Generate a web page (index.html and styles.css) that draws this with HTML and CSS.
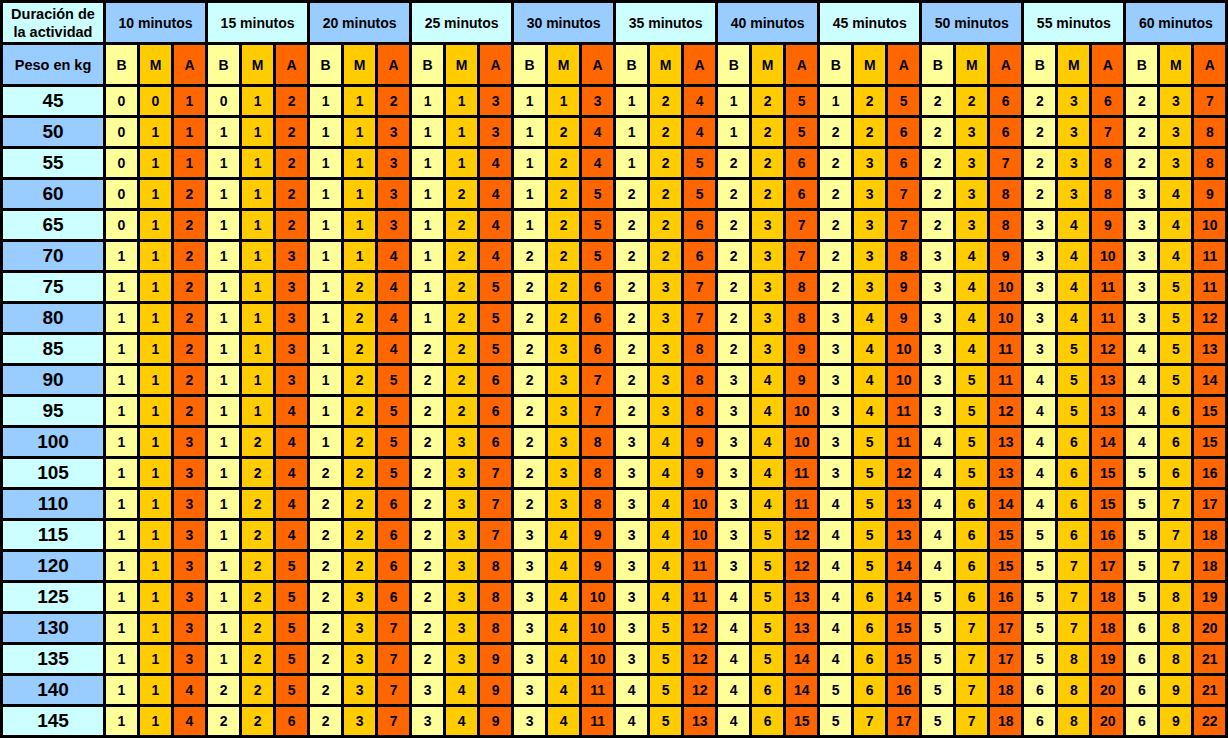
FILE: index.html
```html
<!DOCTYPE html>
<html lang="es">
<head>
<meta charset="utf-8">
<title>Calorías por actividad</title>
<link rel="stylesheet" href="styles.css">
</head>
<body>
<table class="grid">
<colgroup><col class="c-label"><col span="33" class="c-val"></colgroup>
<thead>
<tr class="h1">
<th class="corner">Duración de<br>la actividad</th>
<th colspan="3" class="blue">10 minutos</th><th colspan="3" class="cyan">15 minutos</th><th colspan="3" class="blue">20 minutos</th><th colspan="3" class="cyan">25 minutos</th><th colspan="3" class="blue">30 minutos</th><th colspan="3" class="cyan">35 minutos</th><th colspan="3" class="blue">40 minutos</th><th colspan="3" class="cyan">45 minutos</th><th colspan="3" class="blue">50 minutos</th><th colspan="3" class="cyan">55 minutos</th><th colspan="3" class="blue">60 minutos</th>
</tr>
<tr class="h2">
<th class="peso">Peso en kg</th>
<td>B</td><td>M</td><td>A</td><td>B</td><td>M</td><td>A</td><td>B</td><td>M</td><td>A</td><td>B</td><td>M</td><td>A</td><td>B</td><td>M</td><td>A</td><td>B</td><td>M</td><td>A</td><td>B</td><td>M</td><td>A</td><td>B</td><td>M</td><td>A</td><td>B</td><td>M</td><td>A</td><td>B</td><td>M</td><td>A</td><td>B</td><td>M</td><td>A</td>
</tr>
</thead>
<tbody>
<tr><th>45</th><td>0</td><td>0</td><td>1</td><td>0</td><td>1</td><td>2</td><td>1</td><td>1</td><td>2</td><td>1</td><td>1</td><td>3</td><td>1</td><td>1</td><td>3</td><td>1</td><td>2</td><td>4</td><td>1</td><td>2</td><td>5</td><td>1</td><td>2</td><td>5</td><td>2</td><td>2</td><td>6</td><td>2</td><td>3</td><td>6</td><td>2</td><td>3</td><td>7</td></tr>
<tr><th>50</th><td>0</td><td>1</td><td>1</td><td>1</td><td>1</td><td>2</td><td>1</td><td>1</td><td>3</td><td>1</td><td>1</td><td>3</td><td>1</td><td>2</td><td>4</td><td>1</td><td>2</td><td>4</td><td>1</td><td>2</td><td>5</td><td>2</td><td>2</td><td>6</td><td>2</td><td>3</td><td>6</td><td>2</td><td>3</td><td>7</td><td>2</td><td>3</td><td>8</td></tr>
<tr><th>55</th><td>0</td><td>1</td><td>1</td><td>1</td><td>1</td><td>2</td><td>1</td><td>1</td><td>3</td><td>1</td><td>1</td><td>4</td><td>1</td><td>2</td><td>4</td><td>1</td><td>2</td><td>5</td><td>2</td><td>2</td><td>6</td><td>2</td><td>3</td><td>6</td><td>2</td><td>3</td><td>7</td><td>2</td><td>3</td><td>8</td><td>2</td><td>3</td><td>8</td></tr>
<tr><th>60</th><td>0</td><td>1</td><td>2</td><td>1</td><td>1</td><td>2</td><td>1</td><td>1</td><td>3</td><td>1</td><td>2</td><td>4</td><td>1</td><td>2</td><td>5</td><td>2</td><td>2</td><td>5</td><td>2</td><td>2</td><td>6</td><td>2</td><td>3</td><td>7</td><td>2</td><td>3</td><td>8</td><td>2</td><td>3</td><td>8</td><td>3</td><td>4</td><td>9</td></tr>
<tr><th>65</th><td>0</td><td>1</td><td>2</td><td>1</td><td>1</td><td>2</td><td>1</td><td>1</td><td>3</td><td>1</td><td>2</td><td>4</td><td>1</td><td>2</td><td>5</td><td>2</td><td>2</td><td>6</td><td>2</td><td>3</td><td>7</td><td>2</td><td>3</td><td>7</td><td>2</td><td>3</td><td>8</td><td>3</td><td>4</td><td>9</td><td>3</td><td>4</td><td>10</td></tr>
<tr><th>70</th><td>1</td><td>1</td><td>2</td><td>1</td><td>1</td><td>3</td><td>1</td><td>1</td><td>4</td><td>1</td><td>2</td><td>4</td><td>2</td><td>2</td><td>5</td><td>2</td><td>2</td><td>6</td><td>2</td><td>3</td><td>7</td><td>2</td><td>3</td><td>8</td><td>3</td><td>4</td><td>9</td><td>3</td><td>4</td><td>10</td><td>3</td><td>4</td><td>11</td></tr>
<tr><th>75</th><td>1</td><td>1</td><td>2</td><td>1</td><td>1</td><td>3</td><td>1</td><td>2</td><td>4</td><td>1</td><td>2</td><td>5</td><td>2</td><td>2</td><td>6</td><td>2</td><td>3</td><td>7</td><td>2</td><td>3</td><td>8</td><td>2</td><td>3</td><td>9</td><td>3</td><td>4</td><td>10</td><td>3</td><td>4</td><td>11</td><td>3</td><td>5</td><td>11</td></tr>
<tr><th>80</th><td>1</td><td>1</td><td>2</td><td>1</td><td>1</td><td>3</td><td>1</td><td>2</td><td>4</td><td>1</td><td>2</td><td>5</td><td>2</td><td>2</td><td>6</td><td>2</td><td>3</td><td>7</td><td>2</td><td>3</td><td>8</td><td>3</td><td>4</td><td>9</td><td>3</td><td>4</td><td>10</td><td>3</td><td>4</td><td>11</td><td>3</td><td>5</td><td>12</td></tr>
<tr><th>85</th><td>1</td><td>1</td><td>2</td><td>1</td><td>1</td><td>3</td><td>1</td><td>2</td><td>4</td><td>2</td><td>2</td><td>5</td><td>2</td><td>3</td><td>6</td><td>2</td><td>3</td><td>8</td><td>2</td><td>3</td><td>9</td><td>3</td><td>4</td><td>10</td><td>3</td><td>4</td><td>11</td><td>3</td><td>5</td><td>12</td><td>4</td><td>5</td><td>13</td></tr>
<tr><th>90</th><td>1</td><td>1</td><td>2</td><td>1</td><td>1</td><td>3</td><td>1</td><td>2</td><td>5</td><td>2</td><td>2</td><td>6</td><td>2</td><td>3</td><td>7</td><td>2</td><td>3</td><td>8</td><td>3</td><td>4</td><td>9</td><td>3</td><td>4</td><td>10</td><td>3</td><td>5</td><td>11</td><td>4</td><td>5</td><td>13</td><td>4</td><td>5</td><td>14</td></tr>
<tr><th>95</th><td>1</td><td>1</td><td>2</td><td>1</td><td>1</td><td>4</td><td>1</td><td>2</td><td>5</td><td>2</td><td>2</td><td>6</td><td>2</td><td>3</td><td>7</td><td>2</td><td>3</td><td>8</td><td>3</td><td>4</td><td>10</td><td>3</td><td>4</td><td>11</td><td>3</td><td>5</td><td>12</td><td>4</td><td>5</td><td>13</td><td>4</td><td>6</td><td>15</td></tr>
<tr><th>100</th><td>1</td><td>1</td><td>3</td><td>1</td><td>2</td><td>4</td><td>1</td><td>2</td><td>5</td><td>2</td><td>3</td><td>6</td><td>2</td><td>3</td><td>8</td><td>3</td><td>4</td><td>9</td><td>3</td><td>4</td><td>10</td><td>3</td><td>5</td><td>11</td><td>4</td><td>5</td><td>13</td><td>4</td><td>6</td><td>14</td><td>4</td><td>6</td><td>15</td></tr>
<tr><th>105</th><td>1</td><td>1</td><td>3</td><td>1</td><td>2</td><td>4</td><td>2</td><td>2</td><td>5</td><td>2</td><td>3</td><td>7</td><td>2</td><td>3</td><td>8</td><td>3</td><td>4</td><td>9</td><td>3</td><td>4</td><td>11</td><td>3</td><td>5</td><td>12</td><td>4</td><td>5</td><td>13</td><td>4</td><td>6</td><td>15</td><td>5</td><td>6</td><td>16</td></tr>
<tr><th>110</th><td>1</td><td>1</td><td>3</td><td>1</td><td>2</td><td>4</td><td>2</td><td>2</td><td>6</td><td>2</td><td>3</td><td>7</td><td>2</td><td>3</td><td>8</td><td>3</td><td>4</td><td>10</td><td>3</td><td>4</td><td>11</td><td>4</td><td>5</td><td>13</td><td>4</td><td>6</td><td>14</td><td>4</td><td>6</td><td>15</td><td>5</td><td>7</td><td>17</td></tr>
<tr><th>115</th><td>1</td><td>1</td><td>3</td><td>1</td><td>2</td><td>4</td><td>2</td><td>2</td><td>6</td><td>2</td><td>3</td><td>7</td><td>3</td><td>4</td><td>9</td><td>3</td><td>4</td><td>10</td><td>3</td><td>5</td><td>12</td><td>4</td><td>5</td><td>13</td><td>4</td><td>6</td><td>15</td><td>5</td><td>6</td><td>16</td><td>5</td><td>7</td><td>18</td></tr>
<tr><th>120</th><td>1</td><td>1</td><td>3</td><td>1</td><td>2</td><td>5</td><td>2</td><td>2</td><td>6</td><td>2</td><td>3</td><td>8</td><td>3</td><td>4</td><td>9</td><td>3</td><td>4</td><td>11</td><td>3</td><td>5</td><td>12</td><td>4</td><td>5</td><td>14</td><td>4</td><td>6</td><td>15</td><td>5</td><td>7</td><td>17</td><td>5</td><td>7</td><td>18</td></tr>
<tr><th>125</th><td>1</td><td>1</td><td>3</td><td>1</td><td>2</td><td>5</td><td>2</td><td>3</td><td>6</td><td>2</td><td>3</td><td>8</td><td>3</td><td>4</td><td>10</td><td>3</td><td>4</td><td>11</td><td>4</td><td>5</td><td>13</td><td>4</td><td>6</td><td>14</td><td>5</td><td>6</td><td>16</td><td>5</td><td>7</td><td>18</td><td>5</td><td>8</td><td>19</td></tr>
<tr><th>130</th><td>1</td><td>1</td><td>3</td><td>1</td><td>2</td><td>5</td><td>2</td><td>3</td><td>7</td><td>2</td><td>3</td><td>8</td><td>3</td><td>4</td><td>10</td><td>3</td><td>5</td><td>12</td><td>4</td><td>5</td><td>13</td><td>4</td><td>6</td><td>15</td><td>5</td><td>7</td><td>17</td><td>5</td><td>7</td><td>18</td><td>6</td><td>8</td><td>20</td></tr>
<tr><th>135</th><td>1</td><td>1</td><td>3</td><td>1</td><td>2</td><td>5</td><td>2</td><td>3</td><td>7</td><td>2</td><td>3</td><td>9</td><td>3</td><td>4</td><td>10</td><td>3</td><td>5</td><td>12</td><td>4</td><td>5</td><td>14</td><td>4</td><td>6</td><td>15</td><td>5</td><td>7</td><td>17</td><td>5</td><td>8</td><td>19</td><td>6</td><td>8</td><td>21</td></tr>
<tr><th>140</th><td>1</td><td>1</td><td>4</td><td>2</td><td>2</td><td>5</td><td>2</td><td>3</td><td>7</td><td>3</td><td>4</td><td>9</td><td>3</td><td>4</td><td>11</td><td>4</td><td>5</td><td>12</td><td>4</td><td>6</td><td>14</td><td>5</td><td>6</td><td>16</td><td>5</td><td>7</td><td>18</td><td>6</td><td>8</td><td>20</td><td>6</td><td>9</td><td>21</td></tr>
<tr><th>145</th><td>1</td><td>1</td><td>4</td><td>2</td><td>2</td><td>6</td><td>2</td><td>3</td><td>7</td><td>3</td><td>4</td><td>9</td><td>3</td><td>4</td><td>11</td><td>4</td><td>5</td><td>13</td><td>4</td><td>6</td><td>15</td><td>5</td><td>7</td><td>17</td><td>5</td><td>7</td><td>18</td><td>6</td><td>8</td><td>20</td><td>6</td><td>9</td><td>22</td></tr>
</tbody>
</table>
</body>
</html>
```

FILE: styles.css
```css
html, body {
  margin: 0;
  padding: 0;
  background: #ffffff;
}

.grid {
  width: 1228px;
  table-layout: fixed;
  border-collapse: separate;
  border-spacing: 3px;
  background: #000000;
  font-family: "Liberation Sans", Arial, sans-serif;
  font-weight: bold;
  color: #000000;
}

.c-label { width: 100px; }
.c-val { width: 31px; }

.grid th,
.grid td {
  padding: 0;
  text-align: center;
  vertical-align: middle;
  font-weight: bold;
  overflow: hidden;
  white-space: nowrap;
}

.h1 th {
  height: 39px;
  font-size: 14px;
}

.h1 .corner {
  background: #ccffff;
  font-size: 14.5px;
  line-height: 18px;
}

.h1 .blue { background: #99ccff; }
.h1 .cyan { background: #ccffff; }

.h2 th,
.h2 td {
  height: 39px;
}

.h2 .peso {
  background: #99ccff;
  font-size: 14.5px;
}

.h2 td {
  font-size: 14px;
}

tbody th {
  height: 28px;
  font-size: 19px;
}

tbody td {
  font-size: 14px;
}

tbody tr:nth-child(odd) th { background: #ccffff; }
tbody tr:nth-child(even) th { background: #99ccff; }

.grid td:nth-child(3n+2) { background: #ffff99; }
.grid td:nth-child(3n+3) { background: #ffcc00; }
.grid td:nth-child(3n+4) { background: #ff6600; }
```
